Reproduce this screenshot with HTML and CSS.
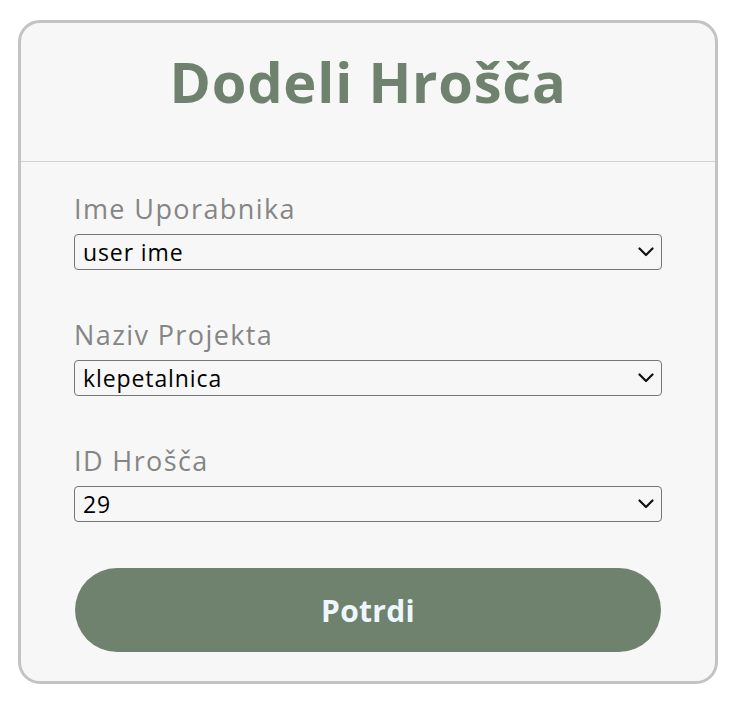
FILE: index.html
```html
<!DOCTYPE html>
<html lang="sl">
<head>
<meta charset="utf-8">
<title>Dodeli Hrošča</title>
<link rel="stylesheet" href="styles.css">
</head>
<body>
<div class="page">
  <div class="card">
    <div class="card-header">
      <h1 class="title">Dodeli Hrošča</h1>
    </div>
    <form class="form">
      <div class="field">
        <label class="label" for="user">Ime Uporabnika</label>
        <div class="select-wrap">
          <select class="select" id="user"><option>user ime</option></select>
          <svg class="chevron" width="16" height="10" viewBox="0 0 16 10" aria-hidden="true"><path d="M1.5 1.5 L8 8 L14.5 1.5" fill="none" stroke="#111" stroke-width="2.2" stroke-linecap="round" stroke-linejoin="round"/></svg>
        </div>
      </div>
      <div class="field">
        <label class="label" for="project">Naziv Projekta</label>
        <div class="select-wrap">
          <select class="select" id="project"><option>klepetalnica</option></select>
          <svg class="chevron" width="16" height="10" viewBox="0 0 16 10" aria-hidden="true"><path d="M1.5 1.5 L8 8 L14.5 1.5" fill="none" stroke="#111" stroke-width="2.2" stroke-linecap="round" stroke-linejoin="round"/></svg>
        </div>
      </div>
      <div class="field">
        <label class="label" for="bug">ID Hrošča</label>
        <div class="select-wrap">
          <select class="select" id="bug"><option>29</option></select>
          <svg class="chevron" width="16" height="10" viewBox="0 0 16 10" aria-hidden="true"><path d="M1.5 1.5 L8 8 L14.5 1.5" fill="none" stroke="#111" stroke-width="2.2" stroke-linecap="round" stroke-linejoin="round"/></svg>
        </div>
      </div>
      <button class="btn" type="button">Potrdi</button>
    </form>
  </div>
</div>
</body>
</html>
```
FILE: styles.css
```css
* { box-sizing: border-box; }
html, body { margin: 0; background: #ffffff; }
body { font-family: "Open Sans", "Noto Sans", sans-serif; }
.page { padding: 20px 18px; }
.card {
  width: 700px;
  height: 664px;
  border: 3px solid #c3c3c3;
  border-radius: 22px;
  background: #f7f7f7;
  display: flex;
  flex-direction: column;
}
.card-header {
  height: 139px;
  border-bottom: 1px solid #d2d2d2;
  display: flex;
  justify-content: center;
  padding-top: 20px;
}
.title {
  margin: 0;
  font-size: 56px;
  line-height: 76px;
  font-weight: 700;
  color: #6e826e;
  letter-spacing: 0.8px;
}
.form {
  padding: 29px 53px 0;
  display: flex;
  flex-direction: column;
}
.field {
  display: flex;
  flex-direction: column;
  margin-bottom: 47px;
}
.field:nth-child(3) { margin-bottom: 46px; }
.label {
  font-size: 27px;
  line-height: 36px;
  letter-spacing: 1.4px;
  color: #858585;
  margin-bottom: 7px;
}
.select-wrap {
  position: relative;
  width: 588px;
}
.select {
  -webkit-appearance: none;
  appearance: none;
  width: 588px;
  height: 36px;
  font-family: inherit;
  font-size: 23px;
  letter-spacing: 0.9px;
  color: #000;
  background: #f7f7f7;
  border: 1px solid #767676;
  border-radius: 4px;
  padding: 0 30px 0 8px;
  display: block;
}
.chevron {
  position: absolute;
  right: 8px;
  top: 13px;
  pointer-events: none;
}
.btn {
  width: 586px;
  margin-left: 1px;
  height: 84px;
  border: none;
  border-radius: 42px;
  background: #6e826e;
  color: #eef7ff;
  font-family: inherit;
  font-size: 30px;
  letter-spacing: 0.3px;
  font-weight: 700;
}
```
